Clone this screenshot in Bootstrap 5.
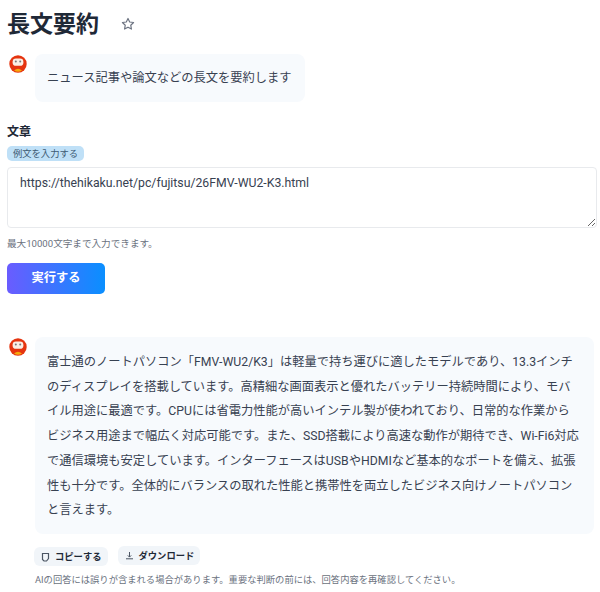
<!DOCTYPE html>
<html lang="ja">
<head>
    <meta charset="UTF-8">
    <meta name="viewport" content="width=device-width, initial-scale=1.0">
    <title>長文要約</title>
    <link href="https://cdn.jsdelivr.net/npm/bootstrap@5.3.0/dist/css/bootstrap.min.css" rel="stylesheet">
    <style>
        body {
            font-family: "Roboto", "Noto Sans CJK JP", sans-serif;
            color: #1f2937;
            overflow: hidden;
        }
        .page-wrap { padding: 9px 3px 0 7px; }
        .page-title {
            font-size: 23px;
            font-weight: 700;
            line-height: 32px;
            margin: 0;
            color: #1f2937;
        }
        .fav-star { margin: 0 0 2px 22px; color: #6b7280; }
        .owl-icon { width: 18px; height: 18px; flex: none; margin: 1px 0 0 2px; }
        .bubble {
            background: #f7fafd;
            border-radius: 8px;
            color: #374151;
            font-size: 12.25px;
        }
        .intro-row { margin-top: 13px; gap: 8px; }
        .intro-bubble { width: 270px; height: 48px; padding: 0 12px; display: flex; align-items: center; white-space: nowrap; }
        .field-label { font-size: 12px; font-weight: 700; line-height: 16px; margin: 22px 0 0; }
        .sample-tag {
            display: block;
            width: 77px;
            background: #bfe0f7;
            color: #3d5a73;
            border-radius: 5px;
            font-size: 9.3px;
            line-height: 15px;
            text-align: center;
            margin-top: 6px;
        }
        .prompt-box {
            display: block;
            width: 100%;
            height: 61px;
            margin-top: 6px;
            border: 1px solid #e8eaed;
            border-radius: 4px;
            padding: 5px 12px;
            font-size: 12.25px;
            line-height: 20px;
            color: #374151;
            font-family: inherit;
        }
        .hint-text { font-size: 9.6px; line-height: 14px; color: #6b7280; margin-top: 9px; }
        .run-btn {
            width: 98px;
            height: 31px;
            margin-top: 12px;
            padding: 0;
            border: 0;
            border-radius: 5px;
            color: #fff;
            font-size: 12.25px;
            font-weight: 700;
            background: linear-gradient(90deg, #6a5cff, #0a8fff);
        }
        .answer-row { margin: 43px 3px 0 0; gap: 8px; }
        .answer-bubble { flex: 1; height: 197px; padding: 13px 12px 0; line-height: 24.7px; }
        .answer-bubble p { margin: 0; }
        .action-row { margin: 12px 0 0 27px; gap: 10px; align-items: flex-start; }
        .action-btn {
            display: inline-flex;
            align-items: center;
            gap: 5px;
            background: #f1f5f9;
            border: 0;
            border-radius: 6px;
            font-size: 9.3px;
            font-weight: 700;
            height: 19px;
            padding: 0 6px 0 7px;
            color: #1f2937;
        }
        .copy-btn { margin-top: 1px; }
        .disclaimer { margin: 7px 0 0 28px; font-size: 9.3px; line-height: 14px; color: #6b7280; white-space: nowrap; }
    </style>
</head>
<body>
    <div class="page-wrap">
        <div class="d-flex align-items-center">
            <h1 class="page-title">長文要約</h1>
            <svg class="fav-star" width="14" height="14" viewBox="0 0 24 24" fill="none" stroke="currentColor" stroke-width="2" stroke-linejoin="round"><path d="M12 2.5l2.9 6.1 6.7.9-4.9 4.6 1.2 6.6-5.9-3.2-5.9 3.2 1.2-6.6-4.9-4.6 6.7-.9z"/></svg>
        </div>

        <div class="d-flex intro-row">
            <svg class="owl-icon" viewBox="0 0 18 18">
                <circle cx="9" cy="9" r="8.7" fill="#e5340f"/>
                <path d="M5 15.5q4-3.4 8 0q-4 2.4-8 0z" fill="#f6a70d"/>
                <rect x="3.6" y="3.4" width="10.8" height="7.4" rx="3.4" fill="#fbeee4"/>
                <circle cx="6.8" cy="6.4" r="1" fill="#77777a"/>
                <circle cx="11.2" cy="6.4" r="1" fill="#77777a"/>
            </svg>
            <div class="bubble intro-bubble">ニュース記事や論文などの長文を要約します</div>
        </div>

        <div class="field-label">文章</div>
        <span class="sample-tag">例文を入力する</span>
        <textarea class="prompt-box">https://thehikaku.net/pc/fujitsu/26FMV-WU2-K3.html</textarea>
        <div class="hint-text">最大10000文字まで入力できます。</div>
        <button class="run-btn d-block" type="button">実行する</button>

        <div class="d-flex answer-row">
            <svg class="owl-icon" viewBox="0 0 18 18">
                <circle cx="9" cy="9" r="8.7" fill="#e5340f"/>
                <path d="M5 15.5q4-3.4 8 0q-4 2.4-8 0z" fill="#f6a70d"/>
                <rect x="3.6" y="3.4" width="10.8" height="7.4" rx="3.4" fill="#fbeee4"/>
                <circle cx="6.8" cy="6.4" r="1" fill="#77777a"/>
                <circle cx="11.2" cy="6.4" r="1" fill="#77777a"/>
            </svg>
            <div class="bubble answer-bubble">
                <p>富士通のノートパソコン「FMV-WU2/K3」は軽量で持ち運びに適したモデルであり、13.3インチのディスプレイを搭載しています。高精細な画面表示と優れたバッテリー持続時間により、モバイル用途に最適です。CPUには省電力性能が高いインテル製が使われており、日常的な作業からビジネス用途まで幅広く対応可能です。また、SSD搭載により高速な動作が期待でき、Wi-Fi6対応で通信環境も安定しています。インターフェースはUSBやHDMIなど基本的なポートを備え、拡張性も十分です。全体的にバランスの取れた性能と携帯性を両立したビジネス向けノートパソコンと言えます。</p>
            </div>
        </div>

        <div class="d-flex action-row">
            <button class="action-btn copy-btn" type="button">
                <svg width="9" height="10" viewBox="0 0 9 10" fill="none" stroke="#4b5563" stroke-width="1.2"><path d="M1.5 1.5h6v5L5.5 9H3L1.5 7.5z"/></svg>
                コピーする
            </button>
            <button class="action-btn" type="button">
                <svg width="9" height="9" viewBox="0 0 9 9" fill="none" stroke="#4b5563" stroke-width="1"><path d="M4.5 1v5M2.8 4.4l1.7 1.7 1.7-1.7M1 7.8h7"/></svg>
                ダウンロード
            </button>
        </div>
        <div class="disclaimer">AIの回答には誤りが含まれる場合があります。重要な判断の前には、回答内容を再確認してください。</div>
    </div>
    <script src="https://cdn.jsdelivr.net/npm/bootstrap@5.3.0/dist/js/bootstrap.bundle.min.js"></script>
</body>
</html>
